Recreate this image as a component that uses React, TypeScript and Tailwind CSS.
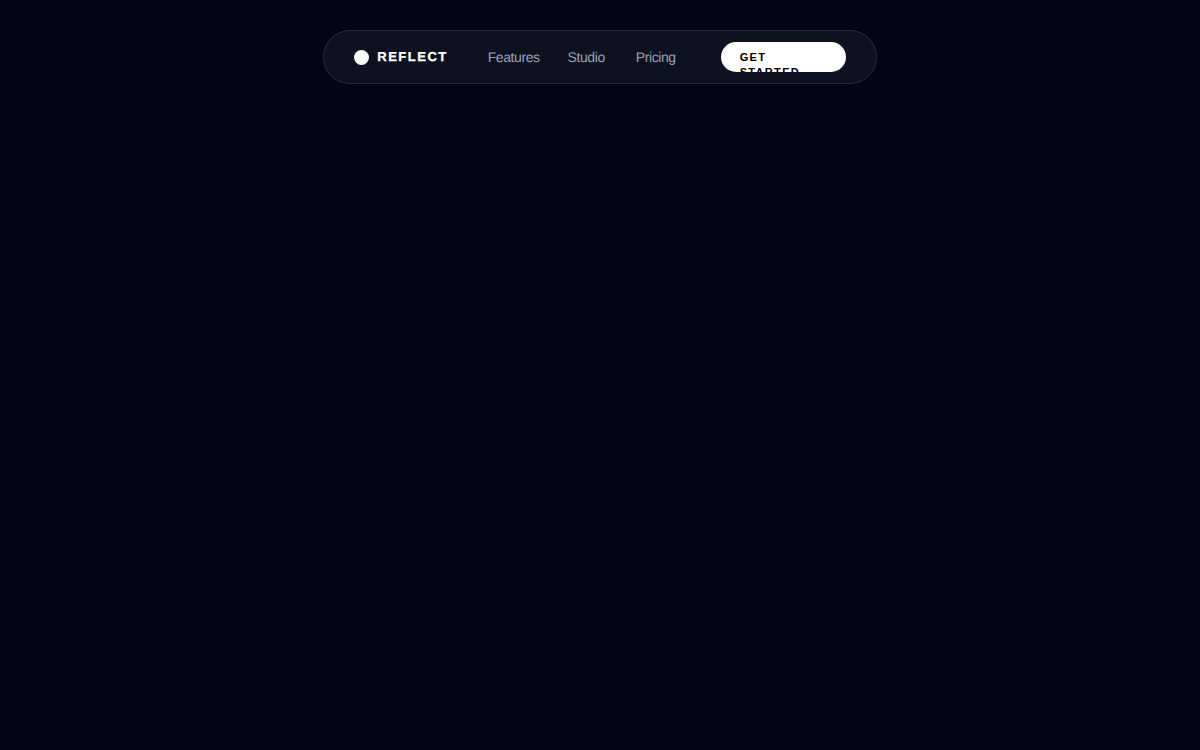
export default function App() {
  return (
    <div className="min-h-screen bg-[#010516] pt-[30px] font-['Liberation_Sans',sans-serif] [text-rendering:geometricPrecision]">
      <nav className="mx-auto flex h-[54px] w-[553.4px] items-center rounded-full border border-white/10 bg-[#0e1120] pl-[30px] pr-[30px]">
        <div className="flex items-center gap-2">
          <div className="h-[15px] w-[15px] rounded-full bg-white" />
          <span className="text-[13px] font-bold tracking-[0.115em] text-white [-webkit-text-stroke:0.3px_white]">REFLECT</span>
        </div>
        <div className="ml-10 flex items-center text-sm tracking-[-0.03em] text-[#94a3b8]">
          <a className="mr-7">Features</a>
          <a className="mr-[31px]">Studio</a>
          <a>Pricing</a>
        </div>
        <button className="ml-auto h-[30px] w-[125px] overflow-hidden rounded-full bg-white px-[19px] pt-2 text-left text-[11px] leading-[15px] font-bold tracking-[0.12em] text-black">
          <span className="block">GET STARTED NOW</span>
        </button>
      </nav>
    </div>
  );
}
